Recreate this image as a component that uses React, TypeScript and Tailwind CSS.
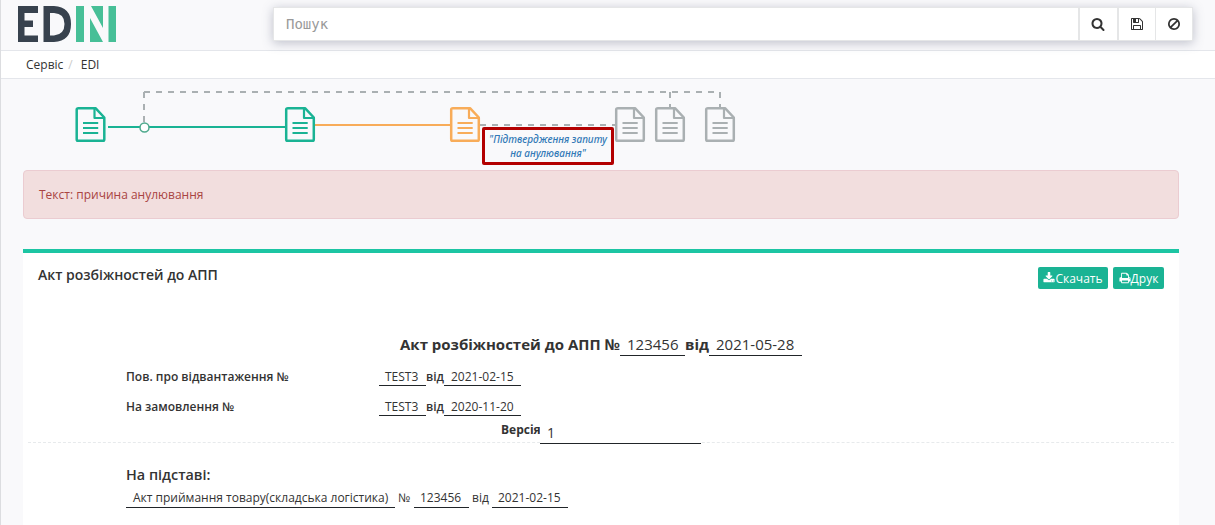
import React from "react";

const PATHS = {
  search:
    "M1216 832q0-185-131.500-316.500t-316.500-131.500-316.500 131.500-131.500 316.500 131.500 316.500 316.500 131.500 316.500-131.500 131.500-316.500zm512 832q0 52-38 90t-90 38q-54 0-90-38l-343-342q-179 124-399 124-143 0-273.500-55.500t-225-150-150-225-55.500-273.500 55.500-273.500 150-225 225-150 273.500-55.500 273.500 55.500 225 150 150 225 55.500 273.500q0 220-124 399l343 343q37 37 37 90z",
  save:
    "M512 1536h768v-384h-768v384zm896 0h128v-896q0-14-10-38.500t-20-34.500l-281-281q-10-10-34-20t-39-10v416q0 40-28 68t-68 28h-576q-40 0-68-28t-28-68v-416h-128v1280h128v-416q0-40 28-68t68-28h832q40 0 68 28t28 68v416zm-384-928v-320q0-13-9.500-22.500t-22.500-9.500h-192q-13 0-22.500 9.500t-9.500 22.500v320q0 13 9.500 22.500t22.500 9.500h192q13 0 22.500-9.500t9.500-22.500zm640 32v928q0 40-28 68t-68 28h-1344q-40 0-68-28t-28-68v-1344q0-40 28-68t68-28h928q40 0 88 20t76 48l280 280q28 28 48 76t20 88z",
  ban:
    "M1440 893q0-161-87-295l-754 753q137 89 297 89 111 0 211.500-43.500t173.500-116.500 116-174.500 43-212.500zm-999 299l755-754q-135-91-300-91-148 0-273 73t-198 199-73 274q0 162 89 299zm1223-299q0 157-61 300t-163.500 246-245 164-298.500 61-298.500-61-245-164-163.500-246-61-300 61-299.500 163.500-245.500 245-164 298.500-61 298.500 61 245 164 163.500 245.500 61 299.500z",
  download:
    "M1344 1344q0-26-19-45t-45-19-45 19-19 45 19 45 45 19 45-19 19-45zm256 0q0-26-19-45t-45-19-45 19-19 45 19 45 45 19 45-19 19-45zm128-224v320q0 40-28 68t-68 28h-1472q-40 0-68-28t-28-68v-320q0-40 28-68t68-28h465l135 136q58 56 136 56t136-56l136-136h464q40 0 68 28t28 68zm-325-569q17 41-14 70l-448 448q-18 19-45 19t-45-19l-448-448q-31-29-14-70 17-39 59-39h256v-448q0-26 19-45t45-19h256q26 0 45 19t19 45v448h256q42 0 59 39z",
  print:
    "M448 1536h896v-256h-896v256zm0-640h896v-384h-160q-40 0-68-28t-28-68v-160h-640v640zm1152 64q0-26-19-45t-45-19-45 19-19 45 19 45 45 19 45-19 19-45zm128 0v416q0 13-9.500 22.500t-22.500 9.500h-224v160q0 40-28 68t-68 28h-960q-40 0-68-28t-28-68v-160h-224q-13 0-22.500-9.500t-9.500-22.500v-416q0-79 56.500-135.500t135.500-56.500h64v-544q0-40 28-68t68-28h672q40 0 88 20t76 48l152 152q28 28 48 76t20 88v256h64q79 0 135.500 56.500t56.500 135.500z",
};

function Icon({ name, className }: { name: keyof typeof PATHS; className: string }) {
  return (
    <svg viewBox="0 0 1792 1792" className={className} fill="currentColor" aria-hidden="true">
      <path d={PATHS[name]} />
    </svg>
  );
}

function Logo() {
  return (
    <svg width="99" height="37" viewBox="0 0 99 37" aria-hidden="true">
      <g fill="#38424e">
        <path d="M0 0H20V7H6.500V14.500H15V21H6.500V29.500H20V36H0Z" />
        <path fillRule="evenodd" d="M25.500 0H36Q53 1 53 18T36 36H25.500ZM32 7V29.500H36Q46.500 28.500 46.500 18T36 7Z" />
      </g>
      <g fill="#47bf97">
        <path d="M58 0H66V36H58ZM90.500 0H98V36H90.500ZM72 12L85 36H72ZM73 0H85V22Z" />
      </g>
    </svg>
  );
}

/* A document stage of the chain; 30 x 35 px */
function DocNode({ x, color }: { x: number; color: string }) {
  return (
    <g transform={`translate(${x} 28)`} fill="none" stroke={color}>
      <path strokeWidth="2.500" strokeLinejoin="round" d="M3 1.200H20L28.800 10.500V32.500Q28.800 33.800 27.500 33.800H2.500Q1.200 33.800 1.200 32.500V2.500Q1.200 1.200 3 1.200Z" />
      <path strokeWidth="2.200" strokeLinejoin="round" d="M19 1V11H29" />
      <path strokeWidth="2.200" d="M7.500 16H22.700M7.500 21H22.700M7.500 26H22.700" />
    </g>
  );
}

function Flow() {
  return (
    <div className="relative h-[91px]">
      <svg width="760" height="91" viewBox="0 0 760 91" className="block" aria-hidden="true">
        <g fill="none" stroke="#aab0b2" strokeWidth="2" strokeDasharray="6 6">
          <path d="M144 43V13" />
          <path d="M144 13H720V28" />
          <path d="M670 13V28" />
          <path d="M480 46H615" />
        </g>
        <path d="M108 48H285" stroke="#1ab394" strokeWidth="2" />
        <path d="M315 46H450" stroke="#f8ac59" strokeWidth="2" />
        <circle cx="144.500" cy="48.500" r="4.500" fill="#fff" stroke="#4da98c" strokeWidth="1.500" />
        <DocNode x={75.500} color="#1ab394" />
        <DocNode x={285} color="#1ab394" />
        <DocNode x={450} color="#f8ac59" />
        <DocNode x={615} color="#aab0b2" />
        <DocNode x={655} color="#aab0b2" />
        <DocNode x={705} color="#aab0b2" />
      </svg>
      <div className="absolute left-[482px] top-[48px] h-[38px] w-[132px] whitespace-nowrap rounded-[2px] border-[3px] border-[#b30000] pt-[2px] text-center font-['Noto_Sans',sans-serif] text-[10px] font-medium italic leading-[14px] text-[#337ab7]">
        "Підтвердження запиту
        <br />
        на анулювання"
      </div>
    </div>
  );
}

function Field({ children, className = "px-[7px]" }: { children: React.ReactNode; className?: string }) {
  return <span className={`block whitespace-nowrap border-b border-[#212529] ${className}`}>{children}</span>;
}

function RefRow({ label, date }: { label: string; date: string }) {
  return (
    <div className="flex h-[30px] items-start pl-[103px] text-xs leading-[18px]">
      <b className="w-[253px] font-semibold">{label}</b>
      <Field className="h-[18px] w-[47px] pl-[6px]">TEST3</Field>
      <b className="w-[18px] font-semibold">від</b>
      <Field className="h-[18px] w-[77px] pl-[7px]">{date}</Field>
    </div>
  );
}

export default function App() {
  return (
    <div className="h-[525px] overflow-hidden border-l border-[#dcdde0] bg-[#f9f9fb] font-['Open_Sans',sans-serif] text-[#333]">
      <header className="flex h-[51px] border-b border-[#e4e6eb] pl-[17px]">
        <div className="w-[255px] pt-[6px]">
          <Logo />
        </div>
        <div className="mt-[7px] flex h-[34px] w-[920px] border border-[#e5e6e7] bg-white shadow-[0_2px_10px_rgba(80,85,115,0.35)]">
          <div className="w-[804px] pl-3 font-['DejaVu_Sans_Mono',monospace] text-sm leading-[32px] text-[#999]">Пошук</div>
          <div className="flex w-[39px] items-center justify-center border-l-2 border-[#e5e6e7] pr-px">
            <Icon name="search" className="size-[14px] text-[#333]" />
          </div>
          <div className="flex w-[38px] items-center justify-center border-l-2 border-[#e5e6e7]">
            <Icon name="save" className="size-[14px] text-[#333]" />
          </div>
          <div className="flex w-[37px] items-center justify-center border-l border-[#e5e6e7]">
            <Icon name="ban" className="size-[14px] text-[#333]" />
          </div>
        </div>
      </header>
      <nav className="flex h-[28px] border-b border-[#e4e6eb] bg-white pl-[25px] text-xs leading-[27px]">
        <span>Сервіс</span>
        <span className="ml-[5px] text-[#ccc]">/</span>
        <span className="ml-2">EDI</span>
      </nav>
      <div className="-ml-px">
        <Flow />
      </div>
      <main className="ml-[22px] w-[1156px]">
        <div className="h-[49px] rounded border border-[#ebccd1] bg-[#f2dede] pl-[15px] text-xs leading-[48px] text-[#a94442]">
          Текст: причина анулювання
        </div>
        <section className="mt-[30px] h-[290px] border-t-4 border-[#1dc5a3] bg-white">
          <div className="flex h-[82px] justify-between px-[15px] pt-[14px]">
            <h5 className="text-sm font-semibold leading-[16px]">Акт розбіжностей до АПП</h5>
            <div className="flex h-[22px] gap-[5px] text-xs leading-[23px] text-white">
              <button className="flex w-[70px] items-center justify-center rounded-[2px] bg-[#1ab394]">
                <Icon name="download" className="size-[12px]" />
                Скачать
              </button>
              <button className="flex w-[51px] items-center justify-center rounded-[2px] bg-[#1ab394]">
                <Icon name="print" className="size-[12px]" />
                Друк
              </button>
            </div>
          </div>
          <div className="flex h-[33px] pl-[377px] text-[15px] leading-[18px]">
            <b className="w-[220px] font-bold">Акт розбіжностей до АПП №</b>
            <Field className="h-[21px] w-[65px] pl-[7px]">123456</Field>
            <b className="w-[24px] font-bold">від</b>
            <Field className="h-[21px] w-[93px] pl-[7px]">2021-05-28</Field>
          </div>
          <RefRow label="Пов. про відвантаження №" date="2021-02-15" />
          <RefRow label="На замовлення №" date="2020-11-20" />
          <div className="flex h-[15px] items-start pl-[478px]">
            <b className="-mt-[7px] w-[39px] text-xs font-bold leading-[18px]">Версія</b>
            <Field className="relative -mt-[5px] h-[21px] w-[161px] bg-white pl-[7px] text-sm leading-[20px]">1</Field>
          </div>
          <div className="mx-[5px] -mt-px border-t border-dashed border-[#e7eaec]" />
          <div className="pl-[103px] pt-[23px]">
            <h4 className="text-[14.4px] font-semibold leading-[18px]">На підставі:</h4>
            <div className="mt-[5px] flex text-xs leading-[18px]">
              <Field className="w-[269px] pl-[7px]">Акт приймання товару(складська логістика)</Field>
              <span className="w-[19px] pl-[3px]">№</span>
              <Field className="w-[55px] pl-[6px]">123456</Field>
              <span className="w-[23px] pl-[3px]">від</span>
              <Field className="w-[76px] pl-[6px]">2021-02-15</Field>
            </div>
          </div>
        </section>
      </main>
    </div>
  );
}
